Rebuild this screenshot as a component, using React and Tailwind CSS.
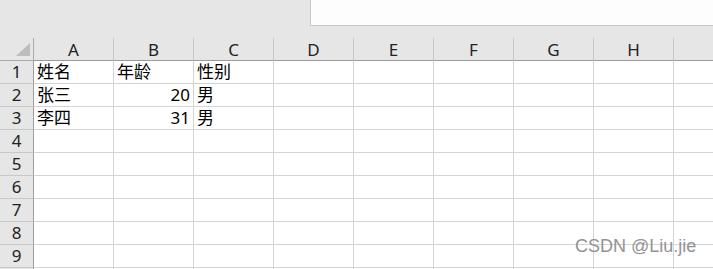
import React from 'react';

const cols = ['A', 'B', 'C', 'D', 'E', 'F', 'G', 'H', ''];

const data = [
  ['姓名', '年龄', '性别'],
  ['张三', 20, '男'],
  ['李四', 31, '男'],
];

function Cell({ value }) {
  const isNum = typeof value === 'number';
  return (
    <div
      className={`h-[23px] border-r border-b border-[#d4d4d4] bg-white flex items-end pb-[1px] overflow-hidden whitespace-nowrap ${
        isNum ? 'justify-end pr-[3px]' : 'pl-[3px]'
      }`}
    >
      {value ?? ''}
    </div>
  );
}

export default function App() {
  const rows = Array.from({ length: 10 }, (_, i) => i + 1);

  return (
    <div
      className="relative w-[713px] h-[269px] overflow-hidden bg-[#e6e6e6] text-[17px] leading-[20px] text-black"
      style={{ fontFamily: '"Noto Sans", "Noto Sans CJK SC", sans-serif' }}
    >
      {/* Formula bar area */}
      <div className="h-[38px] flex">
        <div className="w-[310px] shrink-0" />
        <div className="flex-1 h-[26px] bg-[#fdfdfd] border-l border-b border-[#c6c6c6]" />
      </div>

      {/* Sheet grid */}
      <div className="grid grid-cols-[34px_repeat(9,80px)]">
        {/* corner */}
        <div className="h-[23px] border-r border-b border-[#ababab] bg-[#e6e6e6] flex items-end justify-end pr-[3px] pb-[4px]">
          <div
            className="w-[14px] h-[13px] bg-[#bdbdbd]"
            style={{ clipPath: 'polygon(100% 0, 100% 100%, 0 100%)' }}
          />
        </div>
        {cols.map((c, i) => (
          <div
            key={i}
            className="h-[23px] border-r border-r-[#c8c8c8] border-b border-b-[#9b9b9b] bg-[#e6e6e6] flex items-center justify-center pt-[2px] text-[#222]"
          >
            {c}
          </div>
        ))}

        {rows.map((r) => (
          <React.Fragment key={r}>
            <div className="h-[23px] border-r border-r-[#9e9e9e] border-b border-b-[#c8c8c8] bg-[#e6e6e6] flex items-end justify-center pb-[1px] text-[#222]">
              {r < 10 ? r : ''}
            </div>
            {cols.map((_, ci) => (
              <Cell key={ci} value={data[r - 1] ? data[r - 1][ci] : undefined} />
            ))}
          </React.Fragment>
        ))}
      </div>

      {/* watermark */}
      <div
        className="absolute left-[575px] top-[234px] text-[18px] leading-[24px] text-[#939393]"
        style={{ fontFamily: '"Liberation Sans", Arial, sans-serif' }}
      >
        CSDN @Liu.jie
      </div>
    </div>
  );
}
